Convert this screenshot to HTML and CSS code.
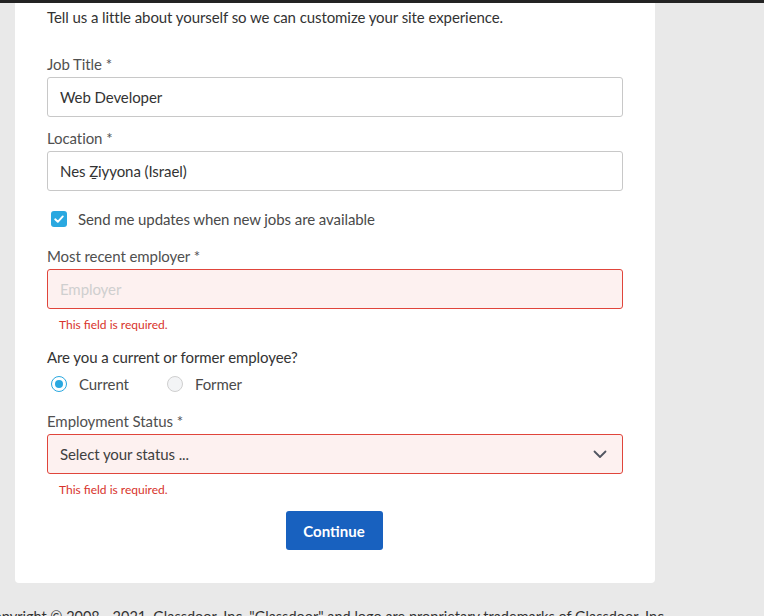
FILE: index.html
```html
<!DOCTYPE html>
<html lang="en">
<head>
<meta charset="utf-8">
<title>Profile</title>
<link rel="stylesheet" href="styles.css">
</head>
<body>
<div class="topbar"></div>
<div class="page">
  <div class="card">
    <p class="intro">Tell us a little about yourself so we can customize your site experience.</p>
    <form class="form">
      <div class="field">
        <label class="label">Job Title *</label>
        <div class="input">Web Developer</div>
      </div>
      <div class="field">
        <label class="label">Location *</label>
        <div class="input">Nes Ẕiyyona (Israel)</div>
      </div>
      <div class="check-row">
        <span class="checkbox">
          <svg width="12" height="12" viewBox="0 0 12 12"><path d="M2.2 6.3 L4.8 8.8 L9.8 3.4" fill="none" stroke="#fff" stroke-width="1.9" stroke-linecap="round" stroke-linejoin="round"/></svg>
        </span>
        <span class="check-text">Send me updates when new jobs are available</span>
      </div>
      <div class="field">
        <label class="label">Most recent employer *</label>
        <div class="input error placeholder">Employer</div>
        <div class="err-msg">This field is required.</div>
      </div>
      <div class="question">Are you a current or former employee?</div>
      <div class="radio-row">
        <span class="radio-item"><span class="radio checked"></span><span class="radio-text">Current</span></span>
        <span class="radio-item"><span class="radio"></span><span class="radio-text">Former</span></span>
      </div>
      <div class="field status">
        <label class="label">Employment Status *</label>
        <div class="input error select">
          <span>Select your status ...</span>
          <svg width="14" height="9" viewBox="0 0 14 9"><path d="M1.5 1.5 L7 7 L12.5 1.5" fill="none" stroke="#505560" stroke-width="1.8" stroke-linecap="round" stroke-linejoin="round"/></svg>
        </div>
        <div class="err-msg">This field is required.</div>
      </div>
      <div class="actions">
        <button type="button" class="btn">Continue</button>
      </div>
    </form>
  </div>
</div>
<div class="footer">Copyright © 2008 - 2021, Glassdoor, Inc. "Glassdoor" and logo are proprietary trademarks of Glassdoor, Inc.</div>
</body>
</html>
```

FILE: styles.css
```css
* { box-sizing: border-box; }
html, body {
  margin: 0;
  padding: 0;
  background: #e9e9e9;
  font-family: Lato, "Open Sans", sans-serif;
  color: #4a4a4a;
  letter-spacing: -0.08px;
  overflow: hidden;
}
.topbar {
  height: 3px;
  background: #232323;
}
.page {
  padding-left: 15px;
  width: 655px;
}
.card {
  background: #fff;
  border-radius: 0 0 4px 4px;
  padding: 4px 32px 33px 32px;
}
.intro {
  margin: 0;
  font-size: 15px;
  line-height: 20px;
  color: #333;
}
.form {
  display: flex;
  flex-direction: column;
  margin-top: 27px;
}
.field {
  display: flex;
  flex-direction: column;
}
.field + .field { margin-top: 11px; }
.label {
  font-size: 15px;
  line-height: 20px;
  color: #505050;
  margin-bottom: 3px;
}
.input {
  height: 40px;
  border: 1px solid #c8c8c8;
  border-radius: 3px;
  padding: 0 12px;
  display: flex;
  align-items: center;
  font-size: 15px;
  color: #333;
  background: #fff;
}
.input.error {
  border-color: #e0453b;
  background: #fdf1f0;
}
.input.placeholder { color: #cfcfcf; }
.input.select {
  justify-content: space-between;
  color: #404040;
  padding-right: 15px;
}
.err-msg {
  margin-top: 8px;
  padding-left: 12px;
  font-size: 12px;
  line-height: 15px;
  letter-spacing: 0;
  color: #d8332b;
}
.check-row {
  margin-top: 18px;
  display: flex;
  align-items: center;
  height: 20px;
  padding-left: 4px;
}
.checkbox {
  width: 16px;
  height: 16px;
  border-radius: 3px;
  background: #2aa8e0;
  display: flex;
  align-items: center;
  justify-content: center;
}
.check-text {
  margin-left: 11px;
  font-size: 15px;
  color: #4a4a4a;
}
.check-row + .field { margin-top: 17px; }
.question {
  margin-top: 15px;
  font-size: 15px;
  line-height: 20px;
  color: #333;
}
.radio-row {
  margin-top: 7px;
  display: flex;
  align-items: center;
  height: 20px;
  padding-left: 4px;
  gap: 38px;
}
.radio-item {
  display: flex;
  align-items: center;
}
.radio {
  width: 16px;
  height: 16px;
  border-radius: 50%;
  border: 1px solid #cfcfcf;
  background: #f3f4f6;
  position: relative;
}
.radio.checked {
  border: 1.5px solid #2aa8e0;
  background: #fff;
}
.radio.checked::after {
  content: "";
  position: absolute;
  left: 50%;
  top: 50%;
  width: 8px;
  height: 8px;
  margin: -4px 0 0 -4px;
  border-radius: 50%;
  background: #2aa8e0;
}
.radio-text {
  margin-left: 12px;
  font-size: 15px;
  color: #4a4a4a;
}
.field.status { margin-top: 17px; }
.actions {
  display: flex;
  justify-content: center;
  margin-top: 14px;
  padding-right: 2px;
}
.btn {
  width: 97px;
  height: 39px;
  border: none;
  border-radius: 3px;
  background: #1861bf;
  color: #fff;
  font-family: Lato, sans-serif;
  font-weight: 700;
  font-size: 15px;
  padding: 0;
}
.footer {
  margin-top: 24px;
  white-space: nowrap;
  text-indent: -16px;
  font-size: 14.5px;
  line-height: 20px;
  letter-spacing: 0;
  color: #333;
}
```
